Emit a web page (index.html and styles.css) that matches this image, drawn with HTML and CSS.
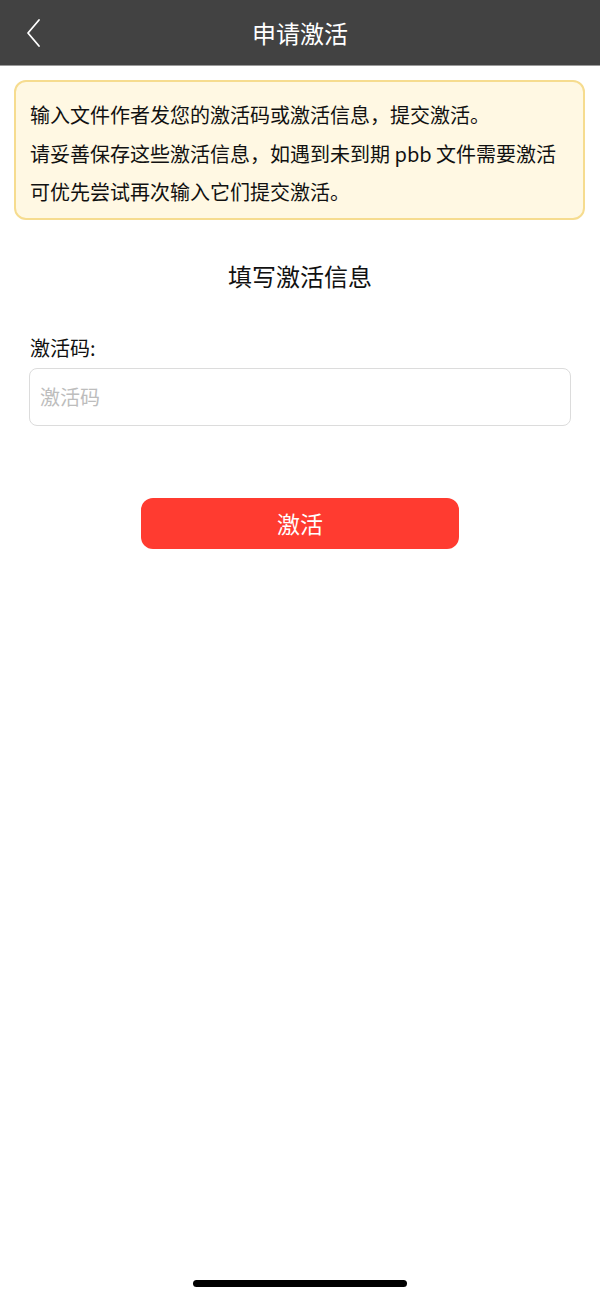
FILE: index.html
```html
<!DOCTYPE html>
<html lang="zh-CN">
<head>
    <meta charset="UTF-8">
    <meta name="viewport" content="width=device-width, initial-scale=1.0">
    <title>申请激活</title>
    <link rel="stylesheet" href="styles.css">
</head>
<body>

    <div class="navbar">
        <a class="back" href="#">
            <svg width="16" height="30" viewBox="0 0 16 30">
                <polyline points="13,2 2,15 13,28" fill="none" stroke="#fff" stroke-width="1.8" stroke-linecap="round" stroke-linejoin="round"/>
            </svg>
        </a>
        <h1>申请激活</h1>
    </div>

    <div class="notice">
        <p>输入文件作者发您的激活码或激活信息，提交激活。</p>
        <p>请妥善保存这些激活信息，如遇到未到期 pbb 文件需要激活</p>
        <p>可优先尝试再次输入它们提交激活。</p>
    </div>

    <div class="form">
        <h2>填写激活信息</h2>

        <label for="code">激活码:</label>
        <input type="text" id="code" placeholder="激活码">

        <button>激活</button>
    </div>

    <div class="home-bar"></div>

</body>
</html>
```

FILE: styles.css
```css
body {
    font-family: "Noto Sans CJK SC", "Noto Sans", sans-serif;
    background-color: #fff;
    margin: 0;
    height: 1299px;
    position: relative;
    color: #111;
}
.navbar {
    height: 65px;
    background-color: #424242;
    border-bottom: 1px solid #9a9a9a;
    display: flex;
    align-items: center;
    justify-content: center;
    position: relative;
}
.navbar h1 {
    margin: 0;
    color: #fff;
    font-size: 24px;
    font-weight: normal;
}
.back {
    position: absolute;
    left: 26px;
    top: 18px;
}
.notice {
    margin: 14px 15px 0 14px;
    padding: 14px 14px 6px 14px;
    background-color: #fff8e3;
    border: 2px solid #f6dc8f;
    border-radius: 12px;
}
.notice p {
    margin: 0;
    font-size: 20px;
    line-height: 38.5px;
}
.form {
    padding: 0 29px;
}
.form h2 {
    margin: 40px 0 0;
    text-align: center;
    font-size: 24px;
    font-weight: normal;
    line-height: 32px;
}
.form label {
    display: block;
    margin-top: 43px;
    padding-left: 1px;
    font-size: 20px;
    line-height: 26px;
}
.form input {
    display: block;
    box-sizing: border-box;
    width: 100%;
    height: 58px;
    margin-top: 7px;
    padding: 0 10px;
    border: 1px solid #dcdcdc;
    border-radius: 8px;
    font-family: inherit;
    font-size: 20px;
}
.form input::placeholder {
    color: #bdbdbd;
}
.form button {
    display: block;
    width: 318px;
    height: 51px;
    margin: 72px auto 0;
    background-color: #ff3b30;
    color: #fff;
    border: none;
    border-radius: 12px;
    font-family: inherit;
    font-size: 23px;
    cursor: pointer;
}
.home-bar {
    position: absolute;
    left: 193px;
    bottom: 12px;
    width: 214px;
    height: 7px;
    border-radius: 4px;
    background-color: #000;
}
```
